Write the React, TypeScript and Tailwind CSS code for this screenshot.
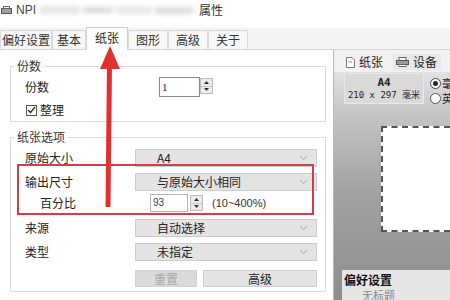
const tabs = ['偏好设置', '基本', '纸张', '图形', '高级', '关于']

function Chevron() {
  return (
    <svg width="9" height="6" viewBox="0 0 9 6" className="shrink-0">
      <polyline points="1,1 4.5,4.5 8,1" fill="none" stroke="#a5a5a5" strokeWidth="1" />
    </svg>
  )
}

function Spinner() {
  return (
    <div className="flex flex-col w-[13px] h-full border border-[#bdbdbd] bg-[#ececec]">
      <div className="flex-1 flex items-center justify-center border-b border-[#c8c8c8]">
        <svg width="5" height="3" viewBox="0 0 5 3"><polygon points="2.5,0 5,3 0,3" fill="#333" /></svg>
      </div>
      <div className="flex-1 flex items-center justify-center">
        <svg width="5" height="3" viewBox="0 0 5 3"><polygon points="0,0 5,0 2.5,3" fill="#333" /></svg>
      </div>
    </div>
  )
}

function Combo({ text }: { text: string }) {
  return (
    <div className="w-[182px] h-[18px] flex items-center pl-[21px] pr-[8px] bg-[#e4e4e4] border border-[#cdcdcd] text-[#222]">
      <span className="flex-1">{text}</span>
      <Chevron />
    </div>
  )
}

export default function App() {
  return (
    <div className="relative w-[450px] h-[300px] overflow-hidden bg-white text-[12px] leading-[16px] text-[#222] font-['Noto_Sans_CJK_SC','Noto_Sans',sans-serif]">

      {/* Title bar */}
      <div className="h-[28px] flex items-center gap-[4px] pb-[8px]">
        <svg width="11" height="9" viewBox="0 0 11 9" className="ml-[1px]">
          <rect x="0.5" y="2.5" width="10" height="5" fill="#9aa0a6" stroke="#555" />
          <rect x="2.5" y="0.5" width="6" height="2" fill="#fff" stroke="#666" />
        </svg>
        <span className="font-['Liberation_Sans',sans-serif] text-[#444] text-[12px]">NPI</span>
        <div className="flex items-center gap-[3px] w-[155px] h-[12px] blur-[2px]">
          <div className="w-[40px] h-[8px] bg-[#e6e6e6]" />
          <div className="w-[30px] h-[6px] bg-[#dadada]" />
          <div className="w-[36px] h-[8px] bg-[#e8e8e8]" />
          <div className="w-[38px] h-[7px] bg-[#dcdcdc]" />
        </div>
        <span className="text-[#333]">属性</span>
      </div>

      {/* Tab strip */}
      <div className="h-[22px] flex items-end bg-[#f4f4f4] border-b border-[#d6d6d6]">
        {tabs.map(t =>
          t === '纸张' ? (
            <div key={t} className="h-[23px] -mb-px w-[42px] flex items-start justify-center pt-[2px] bg-white border border-b-0 border-[#cfcfcf] text-[#222]">
              {t}
            </div>
          ) : (
            <div key={t} className={`h-[19px] flex items-center justify-center border border-b-0 border-[#dadada] bg-[#f7f7f7] text-[#333] ${t === '偏好设置' ? 'w-[52px]' : t === '基本' ? 'w-[34px]' : 'w-[40px]'}`}>
              {t}
            </div>
          )
        )}
        <div className="flex-1" />
      </div>

      {/* Body */}
      <div className="flex h-[250px]">
        {/* Left side */}
        <div className="w-[333px] shrink-0 pl-[10px] pt-[8px]">
          <fieldset className="w-[316px] border border-[#dcdcdc] px-[14px] pt-[3px] pb-[3px]">
            <legend className="px-[3px] -ml-[11px] text-[#333]">份数</legend>
            <div className="flex items-center h-[20px]">
              <span className="w-[134px]">份数</span>
              <div className="flex h-[20px]">
                <div className="w-[41px] h-[20px] border border-[#8a8a8a] bg-white pl-[2px] text-[11px] leading-[18px] font-['Liberation_Serif',serif]">1</div>
                <div className="h-[16px] mt-[1px]"><Spinner /></div>
              </div>
            </div>
            <div className="flex items-center h-[16px] mt-[5px] gap-[3px] pl-[1px]">
              <div className="w-[11px] h-[11px] border border-[#555] bg-white flex items-center justify-center">
                <svg width="9" height="8" viewBox="0 0 9 8"><polyline points="1,4 3.5,6.5 8,1" fill="none" stroke="#222" strokeWidth="1.2" /></svg>
              </div>
              <span>整理</span>
            </div>
          </fieldset>

          <fieldset className="w-[316px] mt-[7px] border border-[#dcdcdc] pl-[14px] pt-[4px] pb-[4px]">
            <legend className="px-[3px] -ml-[11px] text-[#333]">纸张选项</legend>
            <div className="flex items-center h-[18px]">
              <span className="w-[110px]">原始大小</span>
              <Combo text="A4" />
            </div>
            <div className="flex items-center h-[18px] mt-[6px]">
              <span className="w-[110px]">输出尺寸</span>
              <Combo text="与原始大小相同" />
            </div>
            <div className="flex items-center h-[18px] mt-[3px]">
              <span className="w-[125px] pl-[15px]">百分比</span>
              <div className="w-[38px] h-[18px] border border-[#b5b5b5] bg-white pl-[2px] text-[10px] leading-[16px] font-['Liberation_Sans',sans-serif] text-[#444]">93</div>
              <div className="h-[16px] ml-[2px]"><Spinner /></div>
              <span className="ml-[9px] text-[11px] font-['Liberation_Sans',sans-serif] text-[#333]">(10~400%)</span>
            </div>
            <div className="flex items-center h-[18px] mt-[7px]">
              <span className="w-[110px]">来源</span>
              <Combo text="自动选择" />
            </div>
            <div className="flex items-center h-[18px] mt-[6px]">
              <span className="w-[110px]">类型</span>
              <Combo text="未指定" />
            </div>
            <div className="flex items-center h-[17px] mt-[9px] pl-[110px] gap-[6px]">
              <div className="w-[62px] h-[17px] flex items-center justify-center bg-[#dadada] border border-[#d2d2d2] text-[#a8a8a8]">重置</div>
              <div className="w-[114px] h-[17px] flex items-center justify-center bg-[#e4e4e4] border border-[#cdcdcd]">高级</div>
            </div>
          </fieldset>
        </div>

        {/* Right side preview */}
        <div className="flex-1 border-l border-[#b8b8b8] bg-[linear-gradient(to_bottom,#f2f2f2_0px,#dcdcdc_30px,#c2c2c2_70px,#a2a2a2_140px,#8e8e8e_250px)] flex flex-col">
          <div className="h-[22px] flex items-center gap-[4px] pl-[12px] pt-[3px] bg-[#f1f1f1]">
            <svg width="9" height="11" viewBox="0 0 9 11">
              <path d="M0.5 0.5 H6 L8.5 3 V10.5 H0.5 Z" fill="#fff" stroke="#777" />
              <line x1="2" y1="5" x2="6" y2="5" stroke="#999" />
            </svg>
            <span>纸张</span>
            <div className="flex items-center gap-[4px] ml-[6px] pl-[3px] pr-[4px] bg-[#e8e8e8]">
              <svg width="13" height="10" viewBox="0 0 13 10">
                <rect x="3" y="0.5" width="7" height="3" fill="#fff" stroke="#666" />
                <rect x="0.5" y="3.5" width="12" height="4" fill="#9a9a9a" stroke="#555" />
                <rect x="3" y="7.5" width="7" height="2" fill="#fff" stroke="#666" />
              </svg>
              <span>设备</span>
            </div>
          </div>
          <div className="flex items-start mt-[1px] pl-[10px]">
            <div className="w-[80px] h-[31px] bg-[#d9d9d9] border border-[#e8e8e8] flex flex-col items-center justify-center font-['DejaVu_Sans_Mono','Noto_Sans_CJK_SC',monospace] text-[#222]">
              <span className="font-bold text-[11px] leading-[13px]">A4</span>
              <span className="text-[9px] leading-[12px]">210 x 297 毫米</span>
            </div>
            <div className="flex flex-col gap-[2px] ml-[6px] pt-[4px] text-[11px] leading-[13px]">
              <div className="flex items-center gap-[1px] h-[13px]">
                <div className="w-[11px] h-[11px] rounded-full border border-[#444] bg-white flex items-center justify-center">
                  <div className="w-[5px] h-[5px] rounded-full bg-[#222]" />
                </div>
                <span>毫</span>
              </div>
              <div className="flex items-center gap-[1px] h-[13px]">
                <div className="w-[11px] h-[11px] rounded-full border border-[#555] bg-white" />
                <span>英</span>
              </div>
            </div>
          </div>
          <div className="ml-[47px] mt-[21px] w-[90px] h-[109px] bg-white border-2 border-dashed border-[#555]" />
          <div className="ml-[8px] mt-[38px] h-[30px] bg-[#e6e6e6] pl-[2px] pt-[2px]">
            <div className="font-bold text-[#111] leading-[16px]">偏好设置</div>
            <div className="pl-[18px] text-[#888] text-[11px] leading-[14px]">无标题</div>
          </div>
        </div>
      </div>

      {/* Annotations */}
      <div className="absolute left-[17px] top-[164px] w-[297px] h-[51px] border-2 border-[#d23c4b] pointer-events-none" />
      <svg className="absolute left-0 top-0 pointer-events-none" width="450" height="300" viewBox="0 0 450 300">
        <line x1="109.5" y1="64" x2="108" y2="207" stroke="#e3302f" strokeWidth="5" />
        <polygon points="110,46 100,69 120,69" fill="#e3302f" />
      </svg>
    </div>
  )
}
